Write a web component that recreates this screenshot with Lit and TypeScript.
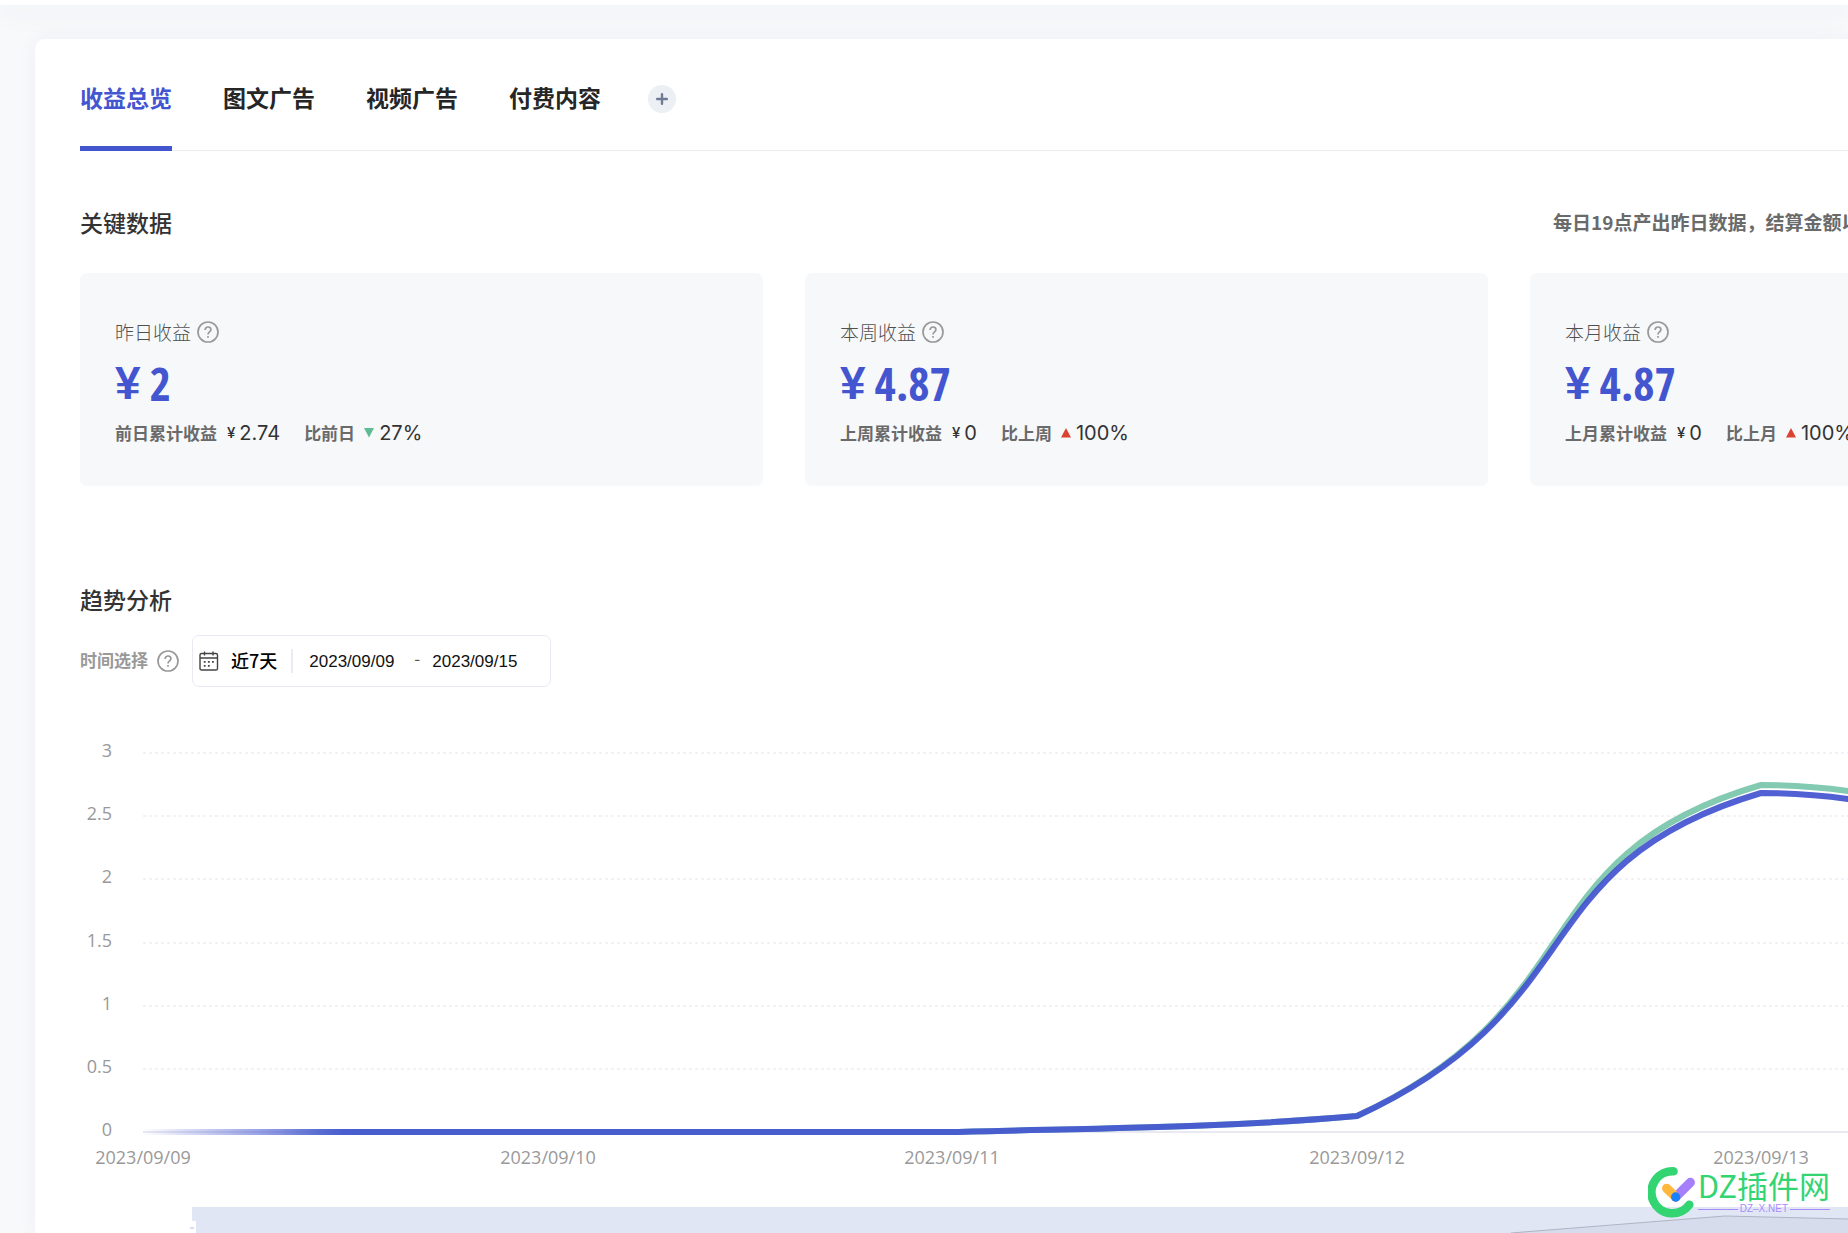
import { LitElement, html, css, svg } from "lit";
import { customElement, state } from "lit/decorators.js";

interface Metric {
  title: string;
  amount: string;
  previousLabel: string;
  previous: string;
  compareLabel: string;
  change: string;
  up: boolean;
}

const TABS = ["收益总览", "图文广告", "视频广告", "付费内容"];

const METRICS: Metric[] = [
  { title: "昨日收益", amount: "2", previousLabel: "前日累计收益", previous: "2.74", compareLabel: "比前日", change: "27%", up: false },
  { title: "本周收益", amount: "4.87", previousLabel: "上周累计收益", previous: "0", compareLabel: "比上周", change: "100%", up: true },
  { title: "本月收益", amount: "4.87", previousLabel: "上月累计收益", previous: "0", compareLabel: "比上月", change: "100%", up: true },
];

const Y_TICKS = ["3", "2.5", "2", "1.5", "1", "0.5", "0"];
const X_TICKS = ["2023/09/09", "2023/09/10", "2023/09/11", "2023/09/12", "2023/09/13"];

const FONT = css`"Noto Sans CJK SC", sans-serif`;

@customElement("help-tip")
export class HelpTip extends LitElement {
  static styles = css`
    :host {
      display: inline-flex;
    }
    .tip {
      display: flex;
      padding: 0;
      border: 0;
      background: none;
      cursor: pointer;
    }
  `;

  render() {
    return html`<button class="tip" type="button" aria-label="说明">
      <svg width="22" height="22" viewBox="0 0 22 22" fill="none" stroke="#999" stroke-width="1.7">
        <circle cx="11" cy="11" r="10" />
        <path d="M8.1 8.9c0-1.7 1.2-2.9 2.9-2.9s2.9 1.1 2.9 2.6c0 1.3-.7 1.9-1.6 2.6-.9.7-1.3 1.2-1.3 2.3" />
        <path d="M11 14.9v1.8" />
      </svg>
    </button>`;
  }
}

@customElement("metric-card")
export class MetricCard extends LitElement {
  static properties = { metric: { attribute: false } };
  declare metric: Metric;

  static styles = css`
    :host {
      display: block;
      padding: 46px 35px 40px;
      border-radius: 7px;
      background: #f7f8fa;
      font-family: ${FONT};
    }
    .title {
      display: flex;
      align-items: center;
      gap: 6px;
      height: 26px;
      color: #505050;
      font-size: 19px;
      font-weight: 300;
      line-height: 26px;
    }
    .amount {
      display: flex;
      align-items: center;
      gap: 9px;
      height: 52px;
      margin: 12px 0 11px;
      color: #4455d0;
      font-weight: 700;
      line-height: 52px;
    }
    .sign {
      font-family: "Liberation Sans", sans-serif;
      font-size: 46px;
    }
    .value {
      font-family: "Liberation Sans Narrow", "Noto Sans ExtraCondensed", "Open Sans Condensed", "Roboto Condensed", sans-serif;
      font-size: 46px;
    }
    .detail {
      display: flex;
      align-items: center;
      height: 26px;
      color: #6a6a6a;
      font-size: 17px;
      font-weight: 700;
      line-height: 26px;
    }
    .previous {
      display: flex;
      align-items: center;
      gap: 4px;
      margin: 0 24px 0 10px;
      color: #333;
    }
    .number {
      color: #333;
      font-family: Inter, sans-serif;
      font-size: 20px;
      font-weight: 400;
    }
    .yen {
      font-family: Inter, sans-serif;
      font-size: 15px;
      font-weight: 500;
    }
    .arrow {
      margin: 0 5px 0 9px;
    }
    .down {
      fill: #5fbb93;
    }
    .up {
      fill: #dc4232;
    }
  `;

  render() {
    const m = this.metric;
    return html`
      <div class="title">${m.title}<help-tip></help-tip></div>
      <div class="amount"><span class="sign">¥</span><span class="value">${m.amount}</span></div>
      <div class="detail">
        <span>${m.previousLabel}</span>
        <span class="previous"><span class="yen">¥</span><span class="number">${m.previous}</span></span>
        <span>${m.compareLabel}</span>
        <svg class="arrow" width="10" height="10" viewBox="0 0 10 10">
          ${m.up
            ? svg`<path class="up" d="M5 0 10 9.500H0z" />`
            : svg`<path class="down" d="M0 0h10L5 9.500z" />`}
        </svg>
        <span class="number">${m.change}</span>
      </div>
    `;
  }
}

@customElement("trend-chart")
export class TrendChart extends LitElement {
  static styles = css`
    :host {
      display: block;
    }
    .plot {
      display: block;
      width: 100%;
      height: 546px;
    }
    .tick {
      fill: #999;
      font-family: "Open Sans", sans-serif;
      font-size: 18px;
    }
    .end {
      text-anchor: end;
    }
    .middle {
      text-anchor: middle;
    }
    .grid {
      stroke: #f1f1f6;
      stroke-width: 2;
      stroke-dasharray: 3 3;
    }
    .axis {
      stroke: #e9e9f1;
      stroke-width: 2;
    }
    .series {
      fill: none;
      stroke-width: 6;
      stroke-linejoin: bevel;
    }
  `;

  render() {
    const left = 63;
    const base = 445;
    const top = 66;
    const step = (base - top) / 6;
    const span = 1618;
    return html`<svg class="plot" role="img" aria-label="收益趋势">
      <defs>
        <linearGradient id="fade-blue" gradientUnits="userSpaceOnUse" x1="62" y1="0" x2="262" y2="0">
          <stop offset="0" stop-color="#4455d0" stop-opacity="0" />
          <stop offset="1" stop-color="#4455d0" stop-opacity="0.93" />
        </linearGradient>
        <linearGradient id="fade-green" gradientUnits="userSpaceOnUse" x1="200" y1="0" x2="280" y2="0">
          <stop offset="0" stop-color="#7cc7ad" stop-opacity="0" />
          <stop offset="1" stop-color="#7cc7ad" stop-opacity="0.95" />
        </linearGradient>
      </defs>
      ${Y_TICKS.map((label, i) => {
        const y = Math.round(top + i * step);
        return svg`
          <line class=${label === "0" ? "axis" : "grid"} x1=${left} y1=${y} x2="100%" y2=${y} />
          <text class="tick end" x="32" y=${y + 4}>${label}</text>`;
      })}
      ${X_TICKS.map(
        (label, i) =>
          svg`<text class="tick middle" x=${left + Math.round((i * span) / 4)} y="477">${label}</text>`
      )}
      <path class="series" stroke="url(#fade-green)"
        d="M62 445H872C1020 441 1140 441 1277 429C1517 318 1441 168 1681 98C1710 98 1740 100 1768 104L2085 160" />
      <path class="series" stroke="url(#fade-blue)"
        d="M62 445H872C1020 441 1140 441 1277 429C1517 319 1441 177 1681 106C1710 106 1740 108 1768 112L2085 170" />
      <rect x="112" y="520" width="100%" height="26" fill="#e1e6f5" />
      <path d="M1431 546 1645 529 1768 532 2085 540V546z" fill="#d7dcec" />
      <path d="M1431 546 1645 529 1768 532 2085 540" fill="none" stroke="#afb3c4" />
      <rect x="106" y="534" width="10" height="12" fill="#fff" />
      <rect x="110" y="540" width="4" height="2" fill="#d5def2" />
    </svg>`;
  }
}

@customElement("app-root")
export class AppRoot extends LitElement {
  @state() private active = 0;

  static styles = css`
    :host {
      display: flex;
      flex-direction: column;
      min-height: 100vh;
      position: relative;
      overflow: hidden;
      background: #f8f9fb;
      color: #262626;
      font-family: ${FONT};
    }
    button {
      font-family: inherit;
      cursor: pointer;
    }
    .topbar {
      height: 5px;
      background: #fff;
      box-shadow: 0 0 32px rgba(50, 60, 90, 0.16);
    }
    .panel {
      flex: 1;
      margin: 34px 0 0 35px;
      padding-left: 45px;
      border-radius: 10px 0 0 0;
      background: #fff;
      box-shadow: 0 0 20px rgba(50, 60, 90, 0.05);
    }
    .tabs {
      display: flex;
      align-items: center;
      gap: 47px;
      height: 111px;
      border-bottom: 1px solid #ebebf0;
    }
    .tab-list {
      display: flex;
      gap: 51px;
      margin-bottom: -1px;
    }
    .tab {
      box-sizing: border-box;
      height: 112px;
      padding: 9px 0 0;
      border: 0;
      border-bottom: 5px solid transparent;
      background: none;
      color: #262626;
      font-size: 23px;
      font-weight: 700;
      line-height: 32px;
    }
    .active {
      border-color: #4455d0;
      color: #4455d0;
    }
    .add {
      display: flex;
      align-items: center;
      justify-content: center;
      width: 28px;
      height: 28px;
      margin-top: 8px;
      padding: 0;
      border: 0;
      border-radius: 50%;
      background: #eceff4;
    }
    .columns {
      display: grid;
      grid-template-columns: repeat(3, minmax(683px, 1fr));
      column-gap: 42px;
    }
    .summary {
      align-items: center;
      height: 102px;
      padding-top: 20px;
    }
    .heading {
      margin: 0;
      color: #333;
      font-size: 23px;
      font-weight: 500;
      line-height: 34px;
    }
    .note {
      grid-column: 3;
      margin: 0;
      padding-left: 23px;
      color: #6a6a6a;
      font-size: 19px;
      font-weight: 700;
      line-height: 34px;
      white-space: nowrap;
    }
    .trend {
      margin-top: 96px;
    }
    .filter {
      display: flex;
      align-items: center;
      gap: 9px;
      margin-top: 19px;
    }
    .filter-label {
      padding-bottom: 3px;
      color: #999;
      font-size: 17px;
      font-weight: 700;
    }
    .range {
      display: flex;
      align-items: center;
      box-sizing: border-box;
      height: 52px;
      margin-left: 4px;
      padding: 0 13px 0 6px;
      border: 1px solid #e8e9f5;
      border-radius: 7px;
      color: #111;
    }
    .preset {
      margin: 0 14px 0 12px;
      padding: 0 0 3px;
      border: 0;
      background: none;
      color: #000;
      font-size: 18px;
      font-weight: 500;
    }
    .rule {
      width: 2px;
      height: 24px;
      margin-right: 16px;
      background: #e8ebf2;
    }
    .date {
      width: 105px;
      padding: 2px 0 0;
      border: 0;
      background: none;
      color: #111;
      font-family: "Liberation Sans", sans-serif;
      font-size: 17px;
      outline: 0;
    }
    .dash {
      width: 18px;
      padding-bottom: 8px;
      color: #555;
      font-size: 17px;
    }
    .brand {
      position: absolute;
      right: 18px;
      bottom: 14px;
      display: flex;
      align-items: center;
    }
    .brand-text {
      display: flex;
      flex-direction: column;
      padding-bottom: 2px;
    }
    .brand-name {
      color: #33d472;
      font-size: 31px;
      line-height: 36px;
      font-weight: 400;
    }
    .brand-site {
      display: flex;
      align-items: center;
      gap: 2px;
      color: #a98cfb;
      font-family: "Liberation Sans", sans-serif;
      font-size: 10px;
      line-height: 12px;
    }
    .brand-line {
      flex: 1;
      height: 1px;
      background: #a98cfb;
    }
  `;

  render() {
    return html`
      <div class="topbar"></div>
      <main class="panel">
        <nav class="tabs">
          <div class="tab-list">
            ${TABS.map(
              (tab, i) => html`<button
                type="button"
                class="tab ${i === this.active ? "active" : ""}"
                @click=${() => (this.active = i)}
              >${tab}</button>`
            )}
          </div>
          <button class="add" type="button" aria-label="添加">
            <svg width="12" height="12" viewBox="0 0 12 12" stroke="#6f7a94" stroke-width="2.400" stroke-linecap="round">
              <path d="M6 1.200v9.600M1.200 6h9.600" />
            </svg>
          </button>
        </nav>

        <div class="columns summary">
          <h2 class="heading">关键数据</h2>
          <p class="note">每日19点产出昨日数据，结算金额以</p>
        </div>
        <div class="columns">
          ${METRICS.map((m) => html`<metric-card .metric=${m}></metric-card>`)}
        </div>

        <section class="trend">
          <h2 class="heading">趋势分析</h2>
          <div class="filter">
            <label class="filter-label" for="start">时间选择</label>
            <help-tip></help-tip>
            <div class="range">
              <svg width="20" height="20" viewBox="0 0 20 20" fill="none" stroke="#444" stroke-width="1.400">
                <rect x="1" y="2.500" width="17.500" height="16.500" rx="1.600" />
                <path d="M1 7h17.500M5.500 .5v4M14 .5v4" />
                <path d="M4.800 10.800h1.800M8.900 10.800h1.800M13 10.800h1.800M4.800 14.800h1.800M8.900 14.800h1.800" stroke-width="1.700" />
              </svg>
              <button class="preset" type="button">近7天</button>
              <span class="rule"></span>
              <input class="date" id="start" type="text" value="2023/09/09" aria-label="开始日期" />
              <span class="dash">-</span>
              <input class="date" type="text" value="2023/09/15" aria-label="结束日期" />
            </div>
          </div>
          <trend-chart></trend-chart>
        </section>
      </main>

      <div class="brand">
        <svg width="50" height="54" viewBox="0 0 50 54" fill="none" stroke-linecap="round">
          <path d="M25.500 6.300A21 21 0 1 0 41.300 39.800" stroke="#33d472" stroke-width="8.600" />
          <path d="M42.300 17.500 27.700 32" stroke="#a57ffc" stroke-width="9.300" />
          <path d="M18.700 23.300 27.700 32" stroke="#ffb83e" stroke-width="9.300" />
          <circle cx="27.700" cy="32" r="4.700" fill="#1a80fb" />
        </svg>
        <div class="brand-text">
          <span class="brand-name">DZ插件网</span>
          <span class="brand-site"><span class="brand-line"></span>DZ–X.NET<span class="brand-line"></span></span>
        </div>
      </div>
    `;
  }
}
